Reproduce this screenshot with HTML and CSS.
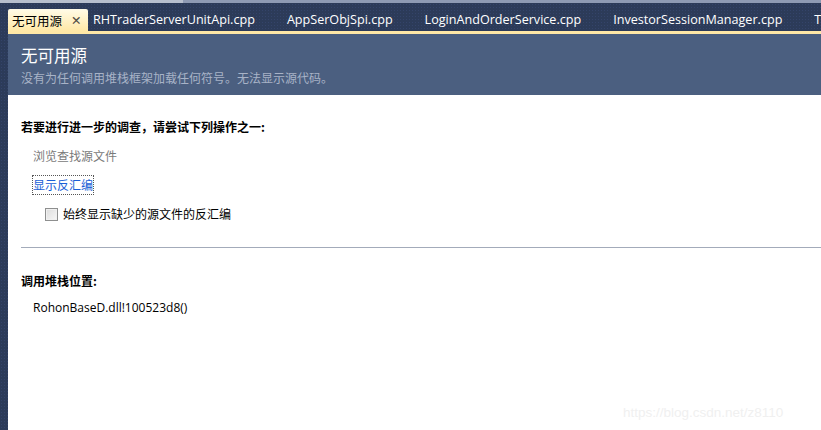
FILE: index.html
```html
<!DOCTYPE html>
<html>
<head>
<meta charset="utf-8">
<link rel="stylesheet" href="styles.css">
</head>
<body>
<div class="topline"></div>
<div class="tabbar">
  <div class="tab active"><span>无可用源</span><span class="close">✕</span></div>
  <div class="tab">RHTraderServerUnitApi.cpp</div>
  <div class="tab">AppSerObjSpi.cpp</div>
  <div class="tab">LoginAndOrderService.cpp</div>
  <div class="tab">InvestorSessionManager.cpp</div>
  <div class="tab">T</div>
</div>
<div class="tabline"></div>
<div class="page">
  <div class="header">
    <div class="title">无可用源</div>
    <div class="subtitle">没有为任何调用堆栈框架加载任何符号。无法显示源代码。</div>
  </div>
  <div class="content">
    <div class="heading first">若要进行进一步的调查，请尝试下列操作之一:</div>
    <div class="item muted">浏览查找源文件</div>
    <div class="item"><span class="link">显示反汇编</span></div>
    <label class="check"><span class="box"></span><span>始终显示缺少的源文件的反汇编</span></label>
    <div class="rule"></div>
    <div class="heading second">调用堆栈位置:</div>
    <div class="item frame">RohonBaseD.dll!100523d8()</div>
    <div class="watermark">https://blog.csdn.net/z8110</div>
  </div>
</div>
</body>
</html>
```
FILE: styles.css
```css
html, body {
  margin: 0;
  padding: 0;
  width: 821px;
  height: 430px;
  overflow: hidden;
}
body {
  background-color: #2c3b59;
  background-image: radial-gradient(#34446a 0.6px, transparent 0.8px);
  background-size: 3px 3px;
  font-family: "Noto Sans CJK SC", "Noto Sans", sans-serif;
  display: flex;
  flex-direction: column;
}
.topline {
  height: 3px;
  background: linear-gradient(to right, #b7bfcd 0, #b7bfcd 183px, #8e9ab3 183px);
  flex: none;
}
.tabbar {
  height: 28px;
  display: flex;
  align-items: flex-end;
  padding-left: 8px;
  flex: none;
  white-space: nowrap;
  overflow: hidden;
}
.tab {
  height: 22px;
  line-height: 21px;
  color: #ffffff;
  font-family: "Open Sans", "Noto Sans", sans-serif;
  font-size: 12.6px;
  padding: 0 17px 0 0;
  margin-right: 15px;
  flex: none;
}
.tab.active {
  background: linear-gradient(#fffbe8, #ffe8a6);
  color: #000;
  padding: 0 4px 0 4px;
  margin-right: 5px;
  border-radius: 2px 2px 0 0;
  display: flex;
  align-items: center;
  gap: 9px;
  font-family: "Noto Sans CJK SC", sans-serif;
  font-size: 12.5px;
  width: 72px;
}
.tab.active .close {
  font-size: 12.5px;
  color: #4f4d46;
  font-family: "DejaVu Sans", sans-serif;
}
.tabline {
  height: 3px;
  margin-left: 8px;
  background: #ffe8a6;
  flex: none;
}
.page {
  margin-left: 8px;
  flex: 1;
  display: flex;
  flex-direction: column;
  background: #ffffff;
}
.header {
  height: 61px;
  background: #4b5f80;
  padding: 9px 0 0 13px;
  box-sizing: border-box;
}
.title {
  color: #ffffff;
  font-size: 16.5px;
  line-height: 24px;
}
.subtitle {
  color: #a8b3c7;
  font-size: 12px;
  line-height: 18px;
  margin-top: 2px;
}
.content {
  padding-left: 13px;
  flex: 1;
  font-size: 12px;
  color: #1e1e1e;
}
.heading {
  font-weight: bold;
  color: #000;
  line-height: 18px;
}
.heading.first { margin-top: 23px; }
.item {
  padding-left: 12px;
  line-height: 18px;
  margin-top: 11px;
}
.muted { color: #7a7a7a; }
.link {
  color: #1a5fd6;
  outline: 1px dotted #555;
  outline-offset: 0;
  padding: 0 0 1px 0;
}
.check {
  display: flex;
  align-items: center;
  gap: 5px;
  padding-left: 24px;
  margin-top: 11px;
  line-height: 18px;
  color: #000;
}
.box {
  width: 11px;
  height: 11px;
  border: 1px solid #8e8f8f;
  background: linear-gradient(135deg, #dcdcdc, #f7f7f7);
  box-shadow: inset 0 0 0 1px #f0f0f0;
}
.rule {
  height: 1px;
  background: #a3abba;
  margin-top: 24px;
}
.heading.second { margin-top: 24px; }
.frame {
  color: #000;
  margin-top: 9px;
  font-family: "Open Sans", "Noto Sans", sans-serif;
  font-size: 12px;
}
.watermark {
  margin-top: 88px;
  margin-left: 602px;
  font-family: "Liberation Sans", sans-serif;
  font-size: 13.5px;
  color: #f0f0f0;
}
```
